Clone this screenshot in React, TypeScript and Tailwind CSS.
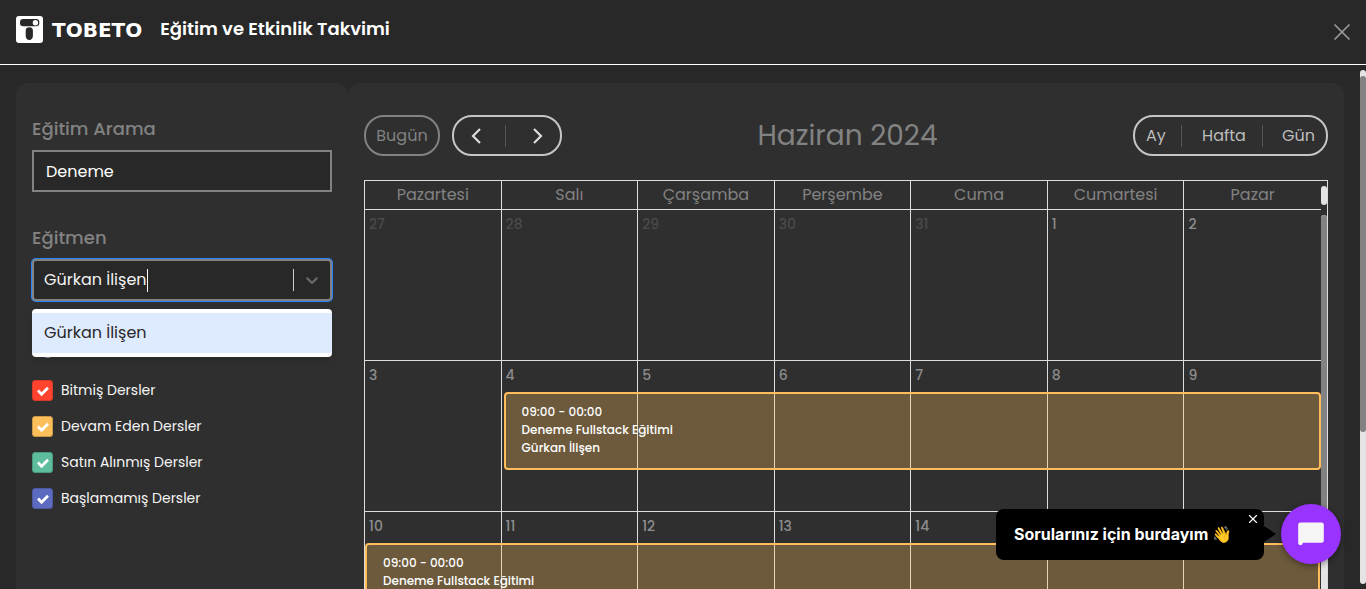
import { useState } from "react";
import { X } from "lucide-react";

const DAYS = ["Pazartesi", "Salı", "Çarşamba", "Perşembe", "Cuma", "Cumartesi", "Pazar"];

const WEEKS = [
  [27, 28, 29, 30, 31, 1, 2],
  [3, 4, 5, 6, 7, 8, 9],
  [10, 11, 12, 13, 14, 15, 16],
];

const FILTERS = [
  { id: "finished", label: "Bitmiş Dersler", box: "bg-[#ff432e] border-[#d63a29]" },
  { id: "ongoing", label: "Devam Eden Dersler", box: "bg-[#fdbf5a] border-[#c99a4c]" },
  { id: "purchased", label: "Satın Alınmış Dersler", box: "bg-[#5dbd9d] border-[#4a9a80]" },
  { id: "upcoming", label: "Başlamamış Dersler", box: "bg-[#5c6bc0] border-[#4d5aa3]" },
];

function Logo() {
  return (
    <div className="flex items-center gap-[9px] text-white">
      <svg className="h-[27px] w-[27px]" viewBox="0 0 27 27" aria-hidden="true">
        <rect width="27" height="27" rx="3" fill="#fff" />
        <rect x="4" y="3" width="19.3" height="7.3" rx="3.2" fill="#282828" />
        <circle cx="19.4" cy="6.7" r="2.7" fill="#fff" />
        <path d="M9.7 14.5c0-2 1.6-3.2 3.6-3.2s3.6 1.2 3.6 3.2v5.2c0 2.5-1.4 4.3-3.6 4.3s-3.6-1.8-3.6-4.3Z" fill="#282828" />
      </svg>
      <span className="font-['DejaVu_Sans',sans-serif] text-[20px] leading-6 font-bold">TOBETO</span>
    </div>
  );
}

function Arrow({ points }: { points: string }) {
  return (
    <svg className="h-4 w-[11px]" viewBox="0 0 11 16" fill="none" stroke="currentColor" strokeWidth="2.2" aria-hidden="true">
      <polyline points={points} />
    </svg>
  );
}

function CourseEvent({ wide }: { wide: boolean }) {
  return (
    <div
      className={
        "absolute top-[31px] z-10 h-[78px] rounded border-2 border-[#ffbe5b] bg-[#ffbf5a]/30 px-4 py-[9px] text-[12px] leading-[18px] font-medium whitespace-nowrap text-white " +
        (wide ? "left-0 w-[calc(700%+6px)]" : "left-[2px] w-[calc(600%+4px)]")
      }
    >
      <p>09:00 - 00:00</p>
      <p>Deneme Fullstack Eğitimi</p>
      <p>Gürkan İlişen</p>
    </div>
  );
}

function Sidebar() {
  const [search, setSearch] = useState("Deneme");
  const [teacher, setTeacher] = useState("Gürkan İlişen");
  return (
    <aside className="w-[332px] shrink-0 rounded-t-xl bg-[#2f2f2f] px-4 pt-8">
      <label htmlFor="search" className="block text-[18px] leading-[27px] font-medium text-[#828282]">
        Eğitim Arama
      </label>
      <input
        id="search"
        value={search}
        onChange={(e) => setSearch(e.target.value)}
        className="mt-2 block h-[42px] w-full border-2 border-[#828282] bg-[#282828] px-3 text-[16px] text-white outline-none"
      />

      <label htmlFor="teacher" className="mt-8 block text-[18px] leading-[27px] font-medium text-[#828282]">
        Eğitmen
      </label>
      <div className="relative mt-2">
        <div className="flex h-[42px] items-center rounded border-2 border-[#828282] bg-[#282828] pl-[10px] ring-1 ring-[#2684ff]">
          <input
            id="teacher"
            role="combobox"
            aria-expanded="true"
            aria-controls="teacher-options"
            value={teacher}
            onChange={(e) => setTeacher(e.target.value)}
            className="[field-sizing:content] bg-transparent text-[16px] text-[#f2f2f2] outline-none"
          />
          <span className="h-[23px] w-px bg-white" />
          <span className="ml-auto h-[22px] w-px bg-[#cccccc]" />
          <button type="button" aria-label="Seçenekleri aç" className="flex w-9 justify-center text-[#666666]">
            <svg className="h-5 w-5" viewBox="0 0 20 20" fill="currentColor" aria-hidden="true">
              <path d="M4.516 7.548c0.436-0.446 1.043-0.481 1.576 0l3.908 3.747 3.908-3.747c0.533-0.481 1.141-0.446 1.574 0 0.436 0.445 0.408 1.197 0 1.615-0.406 0.418-4.695 4.502-4.695 4.502-0.217 0.223-0.502 0.335-0.787 0.335s-0.57-0.112-0.789-0.335c0 0-4.287-4.084-4.695-4.502s-0.436-1.17 0-1.615z" />
            </svg>
          </button>
        </div>
        <ul
          id="teacher-options"
          role="listbox"
          className="absolute top-[50px] z-20 w-full rounded bg-white py-1 shadow-[0_4px_11px_rgba(0,0,0,0.1)]"
        >
          <li role="option" aria-selected="true" className="bg-[#deebff] px-3 py-2 text-[16px] leading-6 text-[#282828]">
            Gürkan İlişen
          </li>
        </ul>
      </div>

      <fieldset className="mt-8">
        <legend className="text-[18px] leading-[27px] font-medium text-[#828282]">Eğitim Durumu</legend>
        <div className="mt-5 flex flex-col gap-[15px]">
          {FILTERS.map((f) => (
            <label key={f.id} htmlFor={f.id} className="flex items-center gap-2 text-[14px] leading-[21px] text-[#f5f5f5]">
              <span className="grid h-[21px] w-[21px] place-items-center">
                <input
                  id={f.id}
                  type="checkbox"
                  defaultChecked
                  className={"peer col-start-1 row-start-1 h-[21px] w-[21px] appearance-none rounded-[3px] border " + f.box}
                />
                <svg
                  className="pointer-events-none invisible col-start-1 row-start-1 h-3 w-3 peer-checked:visible"
                  viewBox="0 0 12 12"
                  fill="none"
                  stroke="#fff"
                  strokeWidth="2.8"
                  aria-hidden="true"
                >
                  <path d="M1 5.6 4.6 9.2 11 2.8" />
                </svg>
              </span>
              {f.label}
            </label>
          ))}
        </div>
      </fieldset>
    </aside>
  );
}

function Calendar() {
  return (
    <section className="flex min-w-0 flex-1 flex-col rounded-t-xl bg-[#2f2f2f] px-4 pt-8">
      <div className="flex items-center justify-between">
        <div className="flex gap-3">
          <button type="button" className="h-[41px] w-[76px] rounded-[20px] border-2 border-[#828282] text-[16px] text-[#828282]">
            Bugün
          </button>
          <div className="flex h-[41px] items-center rounded-[20px] border-2 border-[#c6c6c6] text-[#dcdcdc]">
            <button type="button" aria-label="Önceki ay" className="flex w-[51px] justify-center pr-[6px]">
              <Arrow points="9,1 2,8 9,15" />
            </button>
            <span className="h-[22px] w-px bg-[#555555]" />
            <button type="button" aria-label="Sonraki ay" className="flex w-[54px] justify-center pl-2">
              <Arrow points="2,1 9,8 2,15" />
            </button>
          </div>
        </div>
        <h2 className="text-[28px] leading-10 text-[#828282]">Haziran 2024</h2>
        <div className="flex h-[41px] items-center rounded-[20px] border-2 border-[#c6c6c6] text-[16px] text-[#bdbdbd]">
          <button type="button" className="w-[46px] pr-1">Ay</button>
          <span className="h-[22px] w-px bg-[#555555]" />
          <button type="button" className="w-20 pl-1">Hafta</button>
          <span className="h-[22px] w-px bg-[#555555]" />
          <button type="button" className="w-[63px] pl-2">Gün</button>
        </div>
      </div>

      <div className="mt-6 flex min-h-0 flex-1 overflow-hidden border border-b-0 border-[#dddddd]">
        <div className="min-w-0 flex-1">
          <table className="w-full table-fixed border-separate border-spacing-0">
            <thead>
              <tr>
                {DAYS.map((day) => (
                  <th
                    key={day}
                    scope="col"
                    className="h-[29px] border-r border-b border-[#dddddd] p-0 text-[16px] leading-6 font-normal text-[#828282] last:border-r-0"
                  >
                    {day}
                  </th>
                ))}
              </tr>
            </thead>
            <tbody>
              {WEEKS.map((week, w) => (
                <tr key={week[0]}>
                  {week.map((day, d) => (
                    <td
                      key={day}
                      className="relative h-[151px] border-r border-b border-[#dddddd] p-0 align-top last:border-r-0"
                    >
                      <span
                        className={
                          "block px-1 pt-1 text-[14px] leading-[21px] font-medium " +
                          (w === 0 && d < 5 ? "text-[#4a4a4a]" : "text-[#8c8c8c]")
                        }
                      >
                        {day}
                      </span>
                      {w === 1 && d === 1 && <CourseEvent wide={false} />}
                      {w === 2 && d === 0 && <CourseEvent wide />}
                    </td>
                  ))}
                </tr>
              ))}
            </tbody>
          </table>
        </div>
        <div className="flex w-[6px] shrink-0 flex-col" aria-hidden="true">
          <div className="mt-[5px] h-[19px] rounded-full bg-[#e4e4e4]" />
          <div className="mt-[10px] flex-1 rounded-t-full bg-[#e4e4e4]">
            <div className="h-4/5 rounded-full bg-[#828282]" />
          </div>
        </div>
      </div>
    </section>
  );
}

function ChatBubble() {
  return (
    <div className="absolute right-[25px] bottom-[25px] z-30 flex items-center font-['Inter',sans-serif]">
      <div className="relative flex h-[51px] w-[268px] items-center rounded-lg bg-black pl-[18px]">
        <p className="text-[16px] font-bold whitespace-nowrap text-white">Sorularınız için burdayım 👋</p>
        <button type="button" aria-label="Mesajı kapat" className="absolute top-[3px] right-1 text-white">
          <X size={14} />
        </button>
      </div>
      <span className="h-0 w-0 border-y-8 border-l-[12px] border-y-transparent border-l-black" />
      <button
        type="button"
        aria-label="Sohbeti aç"
        className="ml-[5px] flex h-[60px] w-[60px] items-center justify-center rounded-full bg-[#9933ff] shadow-[0_2px_6px_rgba(0,0,0,0.4)]"
      >
        <svg className="h-6 w-[26px]" viewBox="0 0 26 24" fill="#f5f5f5" aria-hidden="true">
          <path d="M2.5 0.5h21a2.3 2.3 0 0 1 2.3 2.3v15.6a2.3 2.3 0 0 1-2.3 2.3H5l-.8 1.6c-.6 1.3-4 1.4-4-1.2V2.8A2.3 2.3 0 0 1 2.5.5Z" />
        </svg>
      </button>
    </div>
  );
}

export default function App() {
  return (
    <div className="relative flex h-screen flex-col overflow-hidden bg-[#282828] font-['Poppins','Inter',sans-serif]">
      <header className="flex h-[65px] shrink-0 items-start border-b border-white pt-4 pr-[10px] pl-4">
        <Logo />
        <h1 className="ml-[18px] text-[18px] leading-[25px] font-semibold text-white">Eğitim ve Etkinlik Takvimi</h1>
        <button type="button" aria-label="Kapat" className="ml-auto pt-[2px] text-[#999999]">
          <X size={28} strokeWidth={1.5} />
        </button>
      </header>
      <div className="flex min-h-0 flex-1">
        <main className="flex min-w-0 flex-1 pt-[18px] pr-4 pl-4">
          <Sidebar />
          <Calendar />
        </main>
        <div className="mt-[5px] mb-[5px] w-[6px] rounded-full bg-[#e4e4e4] pt-[6px]" aria-hidden="true">
          <div className="h-[70%] rounded-full bg-[#828282]" />
        </div>
      </div>
      <ChatBubble />
    </div>
  );
}
